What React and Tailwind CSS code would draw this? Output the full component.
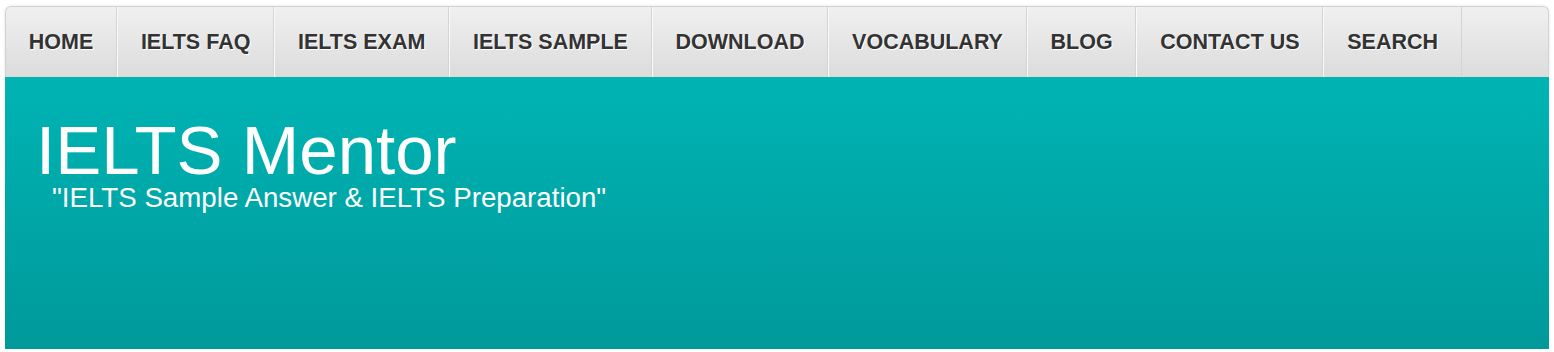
import React from "react";

const links = ["HOME", "IELTS FAQ", "IELTS EXAM", "IELTS SAMPLE", "DOWNLOAD", "VOCABULARY", "BLOG", "CONTACT US", "SEARCH"];

export default function App() {
  return (
    <div className="min-h-[352px] bg-white px-[5px] pt-[6px] font-['Liberation_Sans',Arial,sans-serif]">
      <nav className="flex h-[71px] rounded-t-[6px] border border-b-0 border-[#d2d2d2] bg-gradient-to-b from-[#f0f0f0] to-[#dcdcdc] shadow-[0_0_3px_rgba(0,0,0,0.12)]">
        {links.map((l, i) => (
          <a
            key={l}
            href="#"
            className={`flex items-center px-[22.8px] text-[21.5px] font-bold text-[#333] [text-shadow:1px_1px_0_#fff] border-r border-[#d4d4d4] ${i > 0 ? "border-l border-l-[#fafafa]" : ""}`}
          >
            {l}
          </a>
        ))}
      </nav>
      <header className="h-[272px] bg-gradient-to-b from-[#00b4b4] to-[#00999a] px-[31px] pt-[39px] text-white">
        <h1 className="text-[69px] leading-[69px] font-normal">IELTS Mentor</h1>
        <p className="-mt-[1px] pl-[16px] text-[27.7px] leading-[28px]">"IELTS Sample Answer &amp; IELTS Preparation"</p>
      </header>
    </div>
  );
}
